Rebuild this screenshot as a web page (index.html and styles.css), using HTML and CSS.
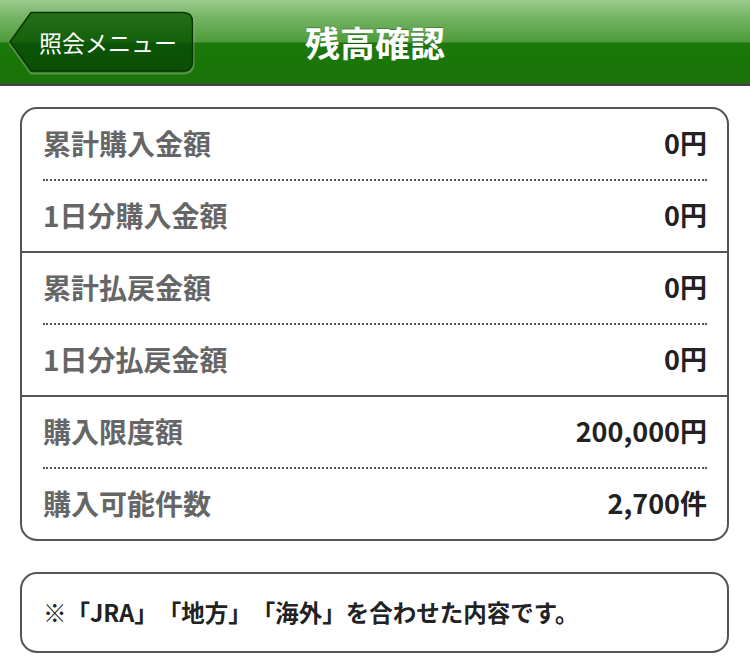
FILE: index.html
```html
<!DOCTYPE html>
<html lang="ja">
<head>
<meta charset="utf-8">
<title>残高確認</title>
<link rel="stylesheet" href="styles.css">
</head>
<body>
<header class="header">
  <div class="back">
    <svg class="back-shape" width="188" height="64" viewBox="0 0 188 64">
      <defs>
        <linearGradient id="bg" x1="0" y1="0" x2="0" y2="1">
          <stop offset="0" stop-color="#246f17"/>
          <stop offset="0.5" stop-color="#15600b"/>
          <stop offset="0.52" stop-color="#0c5406"/>
          <stop offset="1" stop-color="#0b4f05"/>
        </linearGradient>
      </defs>
      <path d="M23 2.5 H175 Q185.5 2.5 185.5 12 V51 Q185.5 61.5 175 61.5 H23 L2 32 Z" fill="none" stroke="rgba(255,255,255,0.25)" stroke-width="2" transform="translate(0,1)"/>
      <path d="M23 1.5 H175 Q184.5 1.5 184.5 11 V50 Q184.5 60 175 60 H23 L2 30.8 Z" fill="url(#bg)" stroke="#0a3505" stroke-width="1.5"/>
    </svg>
    <span class="back-label">照会メニュー</span>
  </div>
  <h1 class="title">残高確認</h1>
  <div class="spacer"></div>
</header>

<main class="content">
  <section class="panel">
    <div class="group">
      <div class="row"><span class="label">累計購入金額</span><span class="value">0円</span></div>
      <div class="dots"></div>
      <div class="row"><span class="label">1日分購入金額</span><span class="value">0円</span></div>
    </div>
    <div class="group">
      <div class="row"><span class="label">累計払戻金額</span><span class="value">0円</span></div>
      <div class="dots"></div>
      <div class="row"><span class="label">1日分払戻金額</span><span class="value">0円</span></div>
    </div>
    <div class="group">
      <div class="row"><span class="label">購入限度額</span><span class="value">200,000円</span></div>
      <div class="dots"></div>
      <div class="row"><span class="label">購入可能件数</span><span class="value">2,700件</span></div>
    </div>
  </section>

  <section class="note">
    <p class="note-text">※「JRA」「地方」「海外」を合わせた内容です。</p>
  </section>
</main>
</body>
</html>
```

FILE: styles.css
```css
* { box-sizing: border-box; }

html, body {
  margin: 0;
  padding: 0;
  background: #ffffff;
  font-family: "Noto Sans CJK JP", "Noto Sans", sans-serif;
}

.header {
  height: 86px;
  display: grid;
  grid-template-columns: 1fr auto 1fr;
  align-items: center;
  background: linear-gradient(to bottom,
    #9acb8b 0px,
    #74b363 18px,
    #4d9b3b 42px,
    #1c780b 43px,
    #1a7409 83px,
    #444444 84px,
    #444444 86px);
}

.back {
  position: relative;
  width: 188px;
  height: 64px;
  margin-left: 8px;
  margin-top: 0;
  display: flex;
  align-items: center;
}

.back-shape {
  position: absolute;
  left: 0;
  top: 0;
}

.back-label {
  position: relative;
  padding-left: 31px;
  color: #ffffff;
  font-size: 23px;
  line-height: 1;
  margin-top: -2px;
}

.title {
  margin: 0;
  color: #ffffff;
  font-size: 35px;
  font-weight: 700;
  line-height: 1;
  margin-top: -4px;
  text-shadow: 0 -1px 0 rgba(0,0,0,0.25);
}

.content {
  padding: 21px 21px 0 20px;
  display: flex;
  flex-direction: column;
  gap: 31px;
}

.panel {
  border: 2px solid #555555;
  border-radius: 17px;
  overflow: hidden;
}

.group + .group {
  border-top: 2px solid #555555;
}

.row {
  height: 70px;
  display: flex;
  justify-content: space-between;
  align-items: center;
  padding: 0 20px 0 21px;
}

.dots {
  margin: 0 20px 0 21px;
  border-top: 2px dotted #555555;
}

.label {
  color: #666666;
  font-size: 28px;
  font-weight: 700;
  line-height: 1;
  margin-top: -3px;
}

.value {
  color: #222222;
  font-size: 27px;
  font-weight: 700;
  line-height: 1;
  margin-top: -3px;
}

.note {
  height: 81px;
  border: 2px solid #555555;
  border-radius: 17px;
  display: flex;
  align-items: center;
  padding: 0 21px;
}

.note-text {
  margin: 0;
  color: #222222;
  font-size: 23.5px;
  font-weight: 700;
  line-height: 1;
  margin-top: 0;
  text-spacing-trim: space-all;
}
```
